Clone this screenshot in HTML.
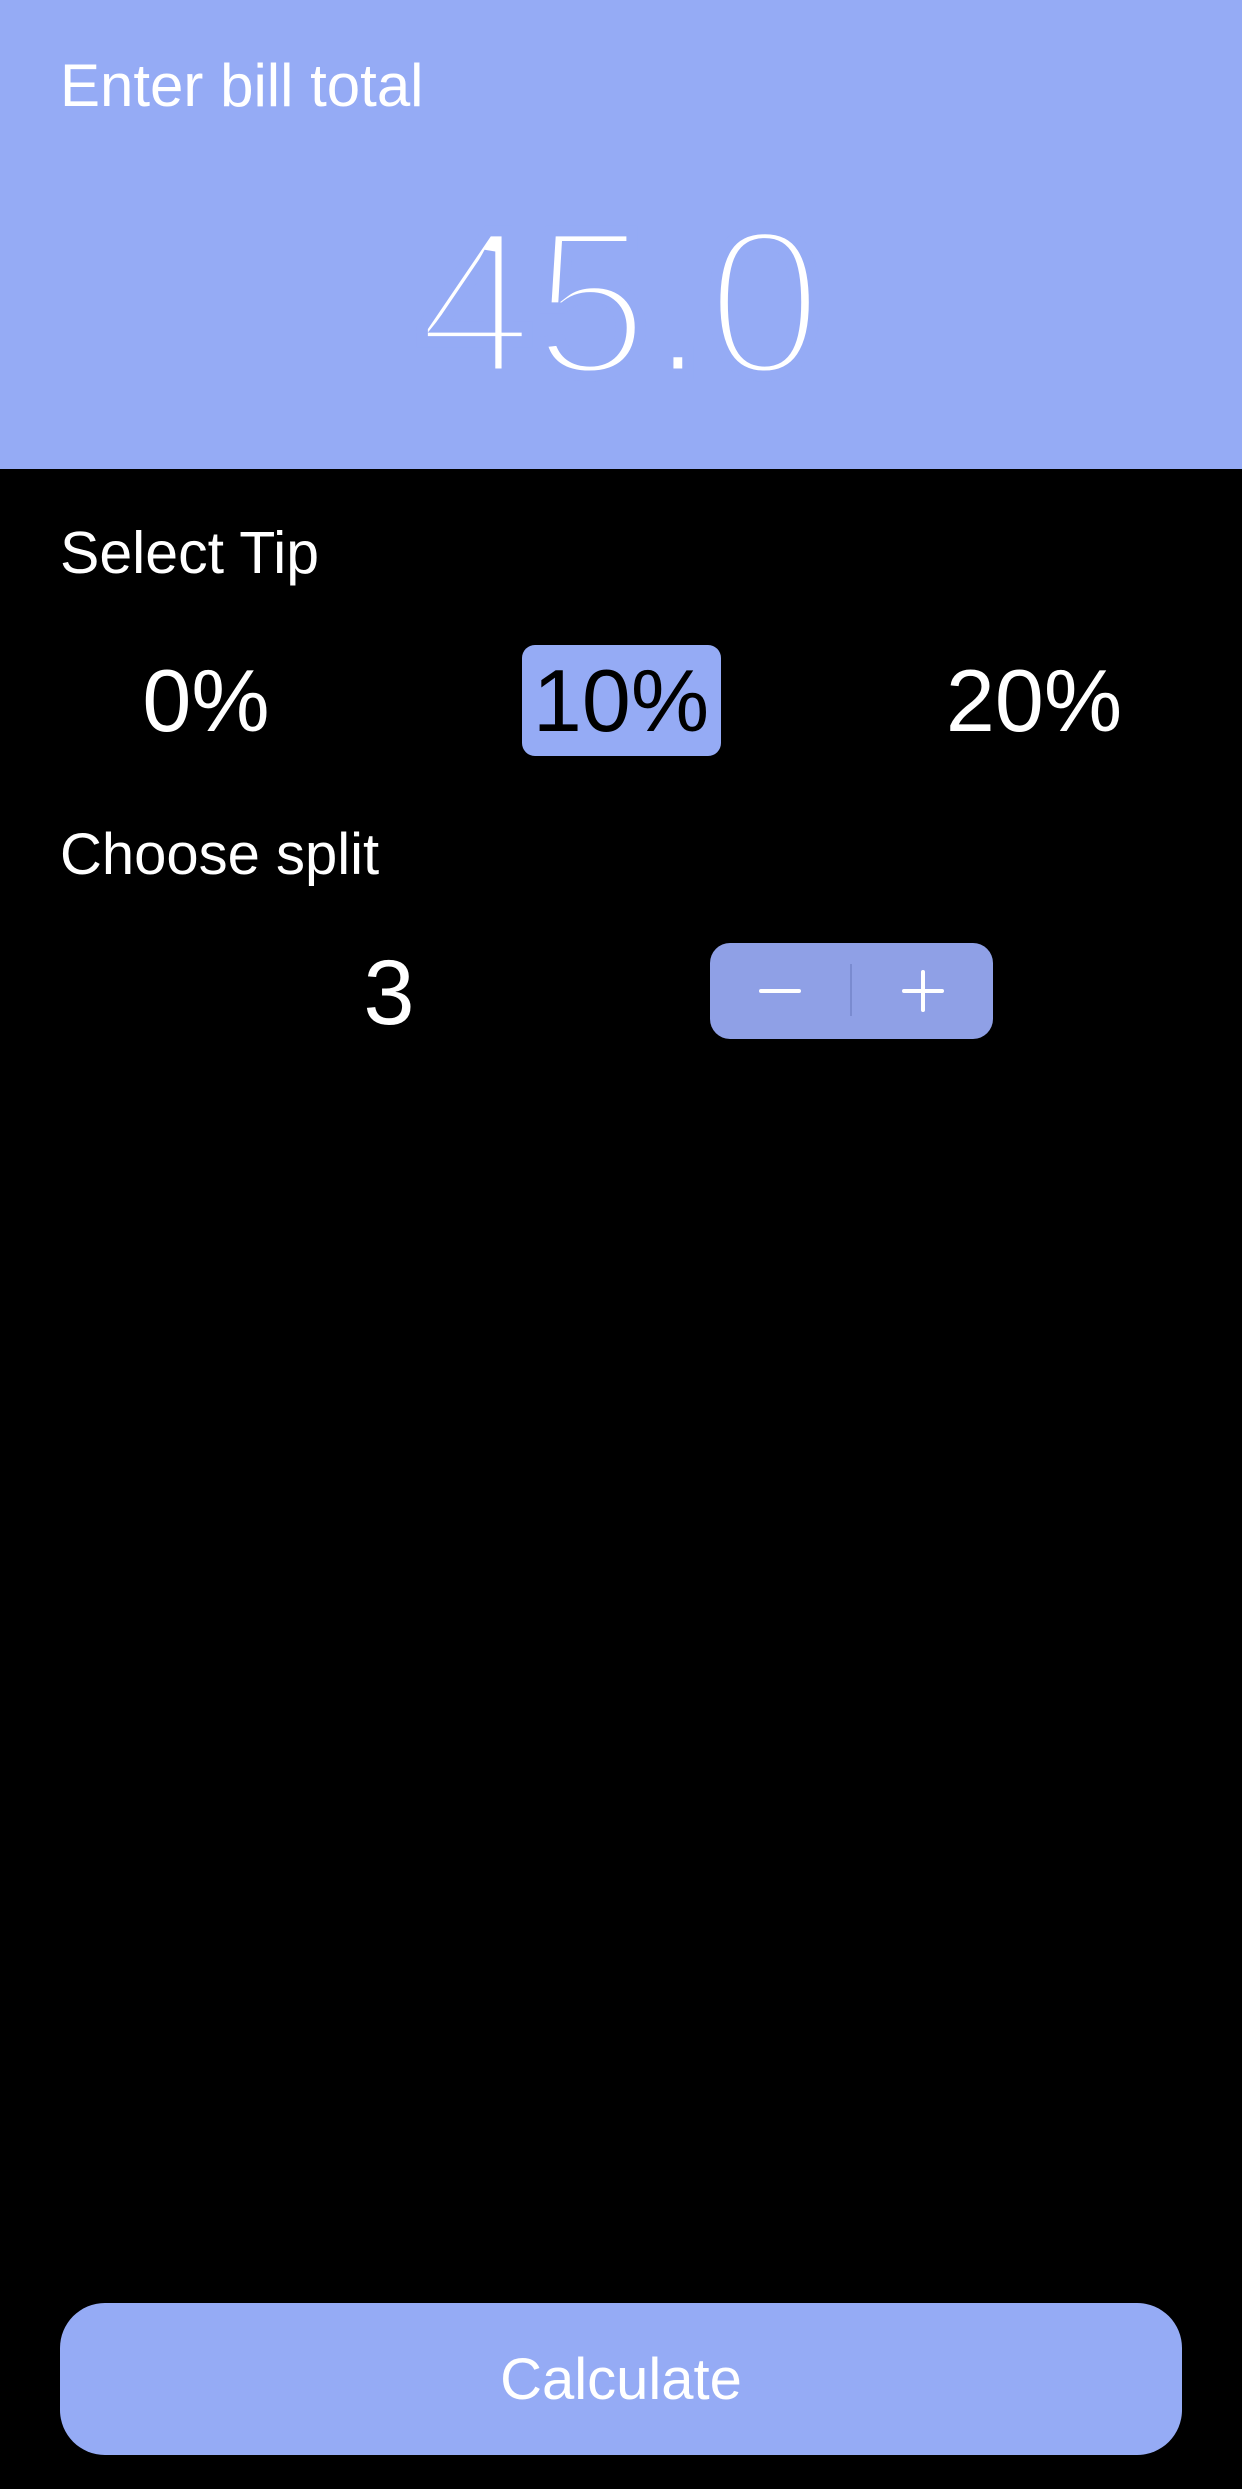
<!DOCTYPE html>
<html><head><meta charset="utf-8"><style>
*{margin:0;padding:0;box-sizing:border-box}
body{width:1242px;height:2489px;background:#000;position:relative;overflow:hidden;font-family:"Liberation Sans",sans-serif;color:#fff}
.hdr{position:absolute;left:0;top:0;width:1242px;height:469px;background:#95abf5}
.t{position:absolute;white-space:nowrap;line-height:1}
.c{transform:translate(-50%,-50%)}
</style></head><body>
<div class="hdr"></div>
<div class="t" style="left:60px;top:56px;font-size:60px;">Enter bill total</div>
<div class="t c" style="left:620px;top:303px;font-size:208px;-webkit-text-stroke:11px #95abf5;paint-order:fill stroke">45.0</div>
<div class="t" style="left:60px;top:524px;font-size:59px">Select Tip</div>
<div style="position:absolute;left:522px;top:645px;width:199px;height:111px;background:#95abf5;border-radius:13px"></div>
<div class="t c" style="left:206px;top:701px;font-size:88px">0%</div>
<div class="t c" style="left:621px;top:701px;font-size:88px;color:#000">10%</div>
<div class="t c" style="left:1034px;top:701px;font-size:88px">20%</div>
<div class="t" style="left:60px;top:826px;font-size:58px">Choose split</div>
<div class="t c" style="left:389px;top:993px;font-size:92px">3</div>
<div style="position:absolute;left:710px;top:943px;width:283px;height:96px;background:#8fa0e6;border-radius:20px"></div>
<div style="position:absolute;left:850px;top:964px;width:2px;height:52px;background:#7a8bd0"></div>
<div style="position:absolute;left:759px;top:989px;width:42px;height:4px;background:#fff;border-radius:2px"></div>
<div style="position:absolute;left:902px;top:989px;width:42px;height:4px;background:#fff;border-radius:2px"></div>
<div style="position:absolute;left:921px;top:970px;width:4px;height:42px;background:#fff;border-radius:2px"></div>
<div style="position:absolute;left:60px;top:2303px;width:1122px;height:152px;background:#95abf5;border-radius:45px"></div>
<div class="t c" style="left:621px;top:2380px;font-size:58px">Calculate</div>
</body></html>
